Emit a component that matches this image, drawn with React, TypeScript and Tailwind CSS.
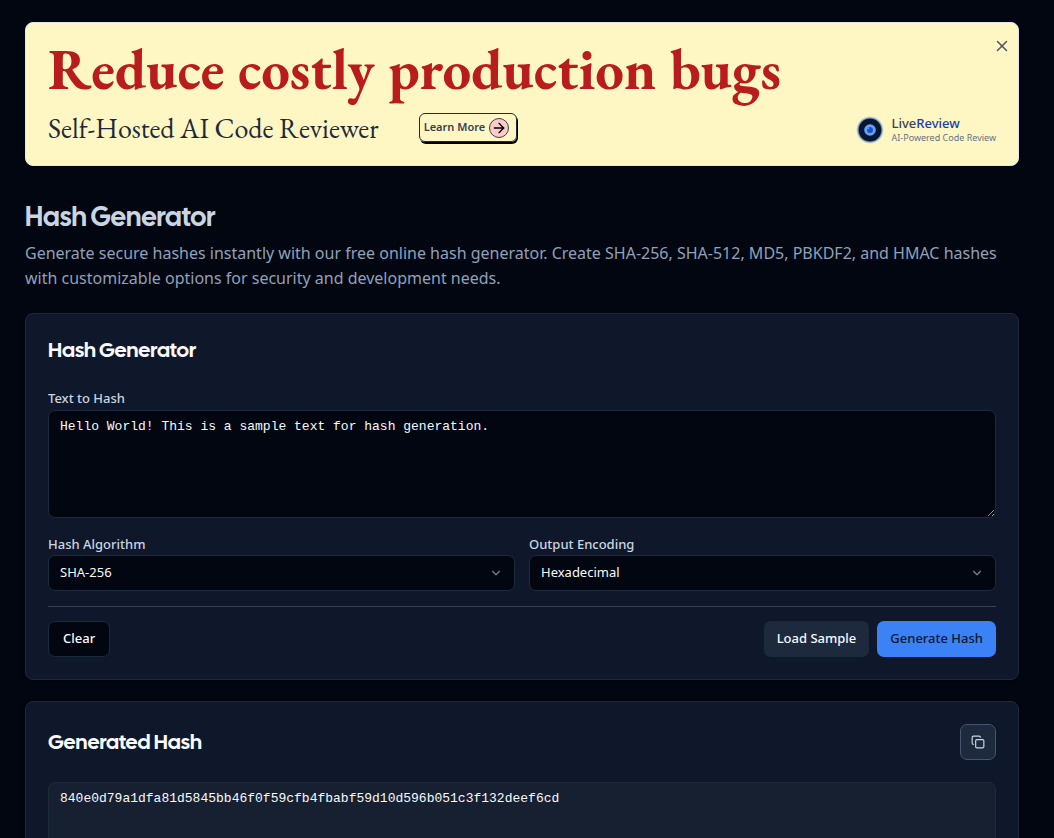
import { useState } from "react";
import type { ReactNode } from "react";
import { ArrowRight, ChevronDown, Copy, X } from "lucide-react";

const SAMPLE = "Hello World! This is a sample text for hash generation.";
const HASH = "840e0d79a1dfa81d5845bb46f0f59cfb4fbabf59d10d596b051c3f132deef6cd";

function LiveReviewLogo() {
  return (
    <svg viewBox="0 0 28 28" className="size-7" aria-hidden="true">
      <defs>
        <radialGradient id="logo-glow">
          <stop offset="0.8" stopColor="#2f62a8" />
          <stop offset="1" stopColor="#93b6d0" stopOpacity="0" />
        </radialGradient>
      </defs>
      <circle cx="14" cy="14" r="14" fill="url(#logo-glow)" />
      <circle cx="14" cy="14" r="11.2" fill="#0b1530" />
      <circle cx="14" cy="14" r="5.8" fill="#60a5fa" />
      <circle cx="14" cy="14" r="3" fill="#1e4fc0" />
      <circle cx="12.3" cy="12.3" r="1.1" fill="#5b9af5" />
    </svg>
  );
}

function Banner({ onClose }: { onClose: () => void }) {
  return (
    <aside className="relative rounded-lg border border-slate-200 bg-[#fef7c3] p-[22px]">
      <p className="font-['EB_Garamond','Liberation_Serif',serif] text-[57px] leading-[48px] font-bold text-[#b91c1c]">
        Reduce costly production bugs
      </p>
      <div className="mt-5 flex h-[30px] items-center justify-between">
        <div className="flex items-start gap-[40px]">
          <p className="font-['EB_Garamond','Liberation_Serif',serif] text-[28px] leading-[30px] text-gray-800">
            Self-Hosted AI Code Reviewer
          </p>
          <a
            href="#learn-more"
            className="flex h-[29px] items-center gap-1 rounded-md border border-gray-800 pr-[7px] pl-1 text-[11px] font-semibold text-gray-700 shadow-[1px_2px_0_#000]"
          >
            Learn More
            <span className="flex size-5 items-center justify-center rounded-full border border-gray-700 bg-[#fecaca] text-black">
              <ArrowRight className="size-4" strokeWidth={2} />
            </span>
          </a>
        </div>
        <div className="flex items-center gap-2 pt-1">
          <LiveReviewLogo />
          <div>
            <p className="text-[13px] leading-4 font-medium text-gray-700">
              Live<span className="text-blue-800">Review</span>
            </p>
            <p className="text-[9px] leading-[14px] text-gray-500">AI-Powered Code Review</p>
          </div>
        </div>
      </div>
      <button
        type="button"
        aria-label="Close banner"
        onClick={onClose}
        className="absolute top-[14px] right-[7px] text-gray-600"
      >
        <X className="size-[18px]" />
      </button>
    </aside>
  );
}

function Card({ children }: { children: ReactNode }) {
  return (
    <section className="rounded-lg border border-slate-800 bg-[#0f172a] p-[22px] shadow-sm">
      {children}
    </section>
  );
}

function CardTitle({ children }: { children: ReactNode }) {
  return (
    <h2 className="font-['Cal_Sans','Lato',sans-serif] text-[21px] leading-7 font-normal">
      {children}
    </h2>
  );
}

function SelectField({ id, label, options }: { id: string; label: string; options: string[] }) {
  return (
    <div className="flex flex-1 flex-col gap-[1px]">
      <label htmlFor={id} className="text-[13px] leading-5 font-medium text-slate-300">
        {label}
      </label>
      <div className="relative">
        <select
          id={id}
          className="h-9 w-full appearance-none rounded-[7px] border border-slate-800 bg-[#020611] px-[11px] text-[13px] text-slate-50"
        >
          {options.map((option) => (
            <option key={option}>{option}</option>
          ))}
        </select>
        <ChevronDown className="pointer-events-none absolute top-[11px] right-3 size-[14px] text-slate-50 opacity-50" />
      </div>
    </div>
  );
}

export default function App() {
  const [text, setText] = useState(SAMPLE);
  const [showBanner, setShowBanner] = useState(true);

  return (
    <main className="min-h-screen bg-[#020611] pt-[22px] pr-[35px] pb-6 pl-[25px] font-['Noto_Sans',sans-serif] text-slate-50">
      {showBanner && <Banner onClose={() => setShowBanner(false)} />}

      <header className="mt-[33px]">
        <h1 className="font-['Cal_Sans','Lato',sans-serif] text-[27px] leading-9 font-normal text-slate-300">
          Hash Generator
        </h1>
        <p className="mt-[6px] text-[16px] leading-[25px] text-slate-400">
          Generate secure hashes instantly with our free online hash generator. Create SHA-256,
          SHA-512, MD5, PBKDF2, and HMAC hashes with customizable options for security and
          development needs.
        </p>
      </header>

      <div className="mt-[22px] flex flex-col gap-[21px]">
        <Card>
          <CardTitle>Hash Generator</CardTitle>
          <div className="mt-6 flex flex-col gap-[2px]">
            <label htmlFor="text" className="text-[13px] leading-5 font-medium text-slate-300">
              Text to Hash
            </label>
            <textarea
              id="text"
              value={text}
              onChange={(event) => setText(event.target.value)}
              className="h-[108px] w-full rounded-[7px] border border-slate-800 bg-[#020611] px-[11px] py-[7px] font-['Liberation_Mono',monospace] text-[13px] leading-[18px]"
            />
          </div>
          <div className="mt-4 flex gap-[14px]">
            <SelectField
              id="algorithm"
              label="Hash Algorithm"
              options={["SHA-256", "SHA-512", "MD5", "PBKDF2", "HMAC"]}
            />
            <SelectField id="encoding" label="Output Encoding" options={["Hexadecimal", "Base64"]} />
          </div>
          <div className="mt-[15px] flex items-center justify-between border-t border-[#374151] pt-[14px] text-[13px] font-medium">
            <button
              type="button"
              onClick={() => setText("")}
              className="h-9 rounded-[7px] border border-slate-800 bg-[#020611] px-[14px]"
            >
              Clear
            </button>
            <div className="flex gap-2">
              <button
                type="button"
                onClick={() => setText(SAMPLE)}
                className="h-9 rounded-[7px] bg-slate-800 px-[13px]"
              >
                Load Sample
              </button>
              <button
                type="button"
                className="h-9 rounded-[7px] bg-[#3b82f6] px-[13px] text-slate-900"
              >
                Generate Hash
              </button>
            </div>
          </div>
        </Card>

        <Card>
          <div className="flex items-center justify-between">
            <CardTitle>Generated Hash</CardTitle>
            <button
              type="button"
              aria-label="Copy hash"
              className="flex size-9 items-center justify-center rounded-[7px] border border-slate-600 bg-slate-800 text-slate-300"
            >
              <Copy className="size-[14px]" />
            </button>
          </div>
          <textarea
            readOnly
            aria-label="Generated hash"
            value={HASH}
            className="mt-[22px] block h-[108px] w-full rounded-[7px] border border-slate-800 bg-[#162031] px-[11px] py-[7px] font-['Liberation_Mono',monospace] text-[13px] leading-[18px]"
          />
        </Card>
      </div>
    </main>
  );
}
